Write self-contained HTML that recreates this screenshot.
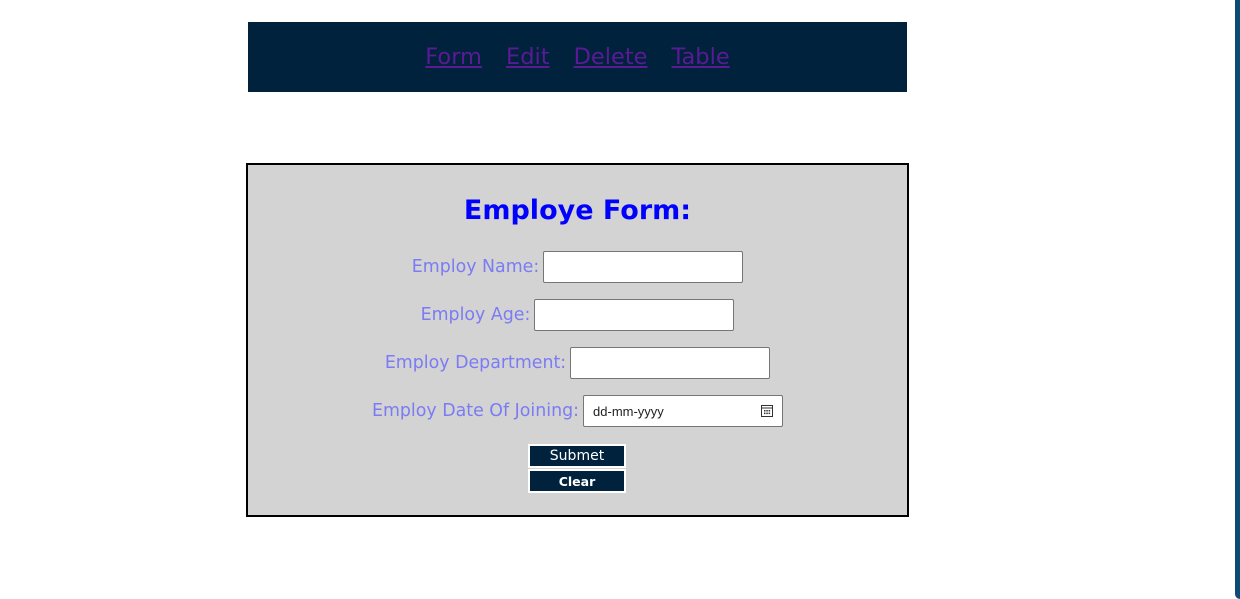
<!DOCTYPE html>
<html><head><style>
html,body{margin:0;padding:0;background:#fff;width:1240px;height:599px;overflow:hidden;font-family:"DejaVu Sans","Liberation Sans",sans-serif;}
.edge{position:absolute;right:0;top:0;width:5px;height:599px;background:#0f4a75;border-bottom-left-radius:6px}
.nav{position:absolute;left:248px;top:22px;width:659px;height:70px;background:#00223d;text-align:center;line-height:70px;font-size:22.5px}
.nav a{color:#5a1a96;text-decoration:underline;margin:0 12px;}
.box{position:absolute;left:246px;top:163px;width:659px;height:350px;border:2px solid #000;background:#d3d3d3;text-align:center}
h1{margin:0;position:absolute;top:30px;width:100%;font-size:27px;color:#0000ff;font-weight:bold}
.row{position:absolute;width:100%;left:0;height:32px;line-height:32px;font-size:17.4px;color:#7b7bf4}
.row input{width:200px;height:32px;box-sizing:border-box;border:1px solid #767676;border-radius:2px;background:#fff;vertical-align:middle;margin-left:4px;font-size:13px;padding:0 9px;text-align:left;color:#222}
.btn{position:absolute;left:280px;width:98px;height:24px;box-sizing:border-box;border:2px solid #fff;background:#00223d;color:#fff;font-size:14px;line-height:21px}
</style></head><body>
<div class="edge"></div>
<div class="nav"><a>Form</a><a>Edit</a><a>Delete</a><a>Table</a></div>
<div class="box">
<h1>Employe Form:</h1>
<div class="row" style="top:86px">Employ Name:<input></div>
<div class="row" style="top:134px">Employ Age:<input></div>
<div class="row" style="top:182px">Employ Department:<input></div>
<div class="row" style="top:230px">Employ Date Of Joining:<span style="position:relative;display:inline-block"><input value="dd-mm-yyyy"><svg style="position:absolute;right:10px;top:9px" width="12" height="13" viewBox="0 0 12 13"><rect x="0.5" y="1.5" width="11" height="11" fill="none" stroke="#333"/><line x1="0.5" y1="4" x2="11.5" y2="4" stroke="#333"/><g fill="#333"><rect x="3" y="6" width="1.5" height="1.5"/><rect x="5.3" y="6" width="1.5" height="1.5"/><rect x="7.6" y="6" width="1.5" height="1.5"/><rect x="3" y="8.6" width="1.5" height="1.5"/><rect x="5.3" y="8.6" width="1.5" height="1.5"/><rect x="7.6" y="8.6" width="1.5" height="1.5"/></g></svg></span></div>
<div class="btn" style="top:279px">Submet</div>
<div class="btn" style="top:304px;font-weight:bold;font-size:12.5px">Clear</div>
</div>
</body></html>
